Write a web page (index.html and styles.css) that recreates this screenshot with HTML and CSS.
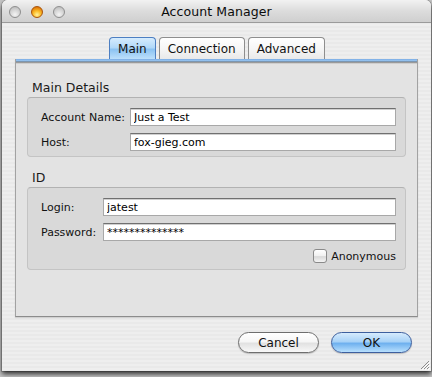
FILE: index.html
```html
<!DOCTYPE html>
<html lang="en">
<head>
    <meta charset="UTF-8">
    <meta name="viewport" content="width=device-width, initial-scale=1.0">
    <title>Account Manager</title>
    <link rel="stylesheet" href="styles.css">
</head>
<body>
    <div class="window">
        <div class="titlebar">
            <div class="lights">
                <span class="light"></span>
                <span class="light light-min"></span>
                <span class="light"></span>
            </div>
            <div class="title">Account Manager</div>
        </div>

        <div class="content">
            <div class="tabs">
                <div class="tab tab-active">Main</div>
                <div class="tab">Connection</div>
                <div class="tab">Advanced</div>
            </div>

            <div class="pane">
                <h3 class="section-title">Main Details</h3>
                <div class="group">
                    <div class="form-grid form-grid-wide">
                        <label for="accountName">Account Name:</label>
                        <input type="text" id="accountName" class="field" value="Just a Test">
                        <label for="host">Host:</label>
                        <input type="text" id="host" class="field" value="fox-gieg.com">
                    </div>
                </div>

                <h3 class="section-title section-gap">ID</h3>
                <div class="group">
                    <div class="form-grid form-grid-narrow">
                        <label for="login">Login:</label>
                        <input type="text" id="login" class="field" value="jatest">
                        <label for="password">Password:</label>
                        <input type="text" id="password" class="field" value="**************">
                    </div>
                    <div class="check-row">
                        <span class="checkbox"></span>
                        <span class="check-label">Anonymous</span>
                    </div>
                </div>
            </div>

            <div class="button-group">
                <button type="button" class="btn">Cancel</button>
                <button type="button" class="btn btn-default">OK</button>
            </div>
        </div>

        <svg class="grip" width="11" height="11" viewBox="0 0 11 11">
            <path d="M10 2 L2 10 M10 5 L5 10 M10 8 L8 10" stroke="#8c8c8c" stroke-width="1"/>
            <path d="M11 3 L3 11 M11 6 L6 11 M11 9 L9 11" stroke="#ffffff" stroke-width="1"/>
        </svg>
    </div>
</body>
</html>
```

FILE: styles.css
```css
/* Basic Reset */
* {
    box-sizing: border-box;
    margin: 0;
    padding: 0;
}

body {
    font-family: "DejaVu Sans", Verdana, sans-serif;
    background-color: #c4c4c4;
    width: 432px;
    height: 377px;
    overflow: hidden;
    padding-left: 2px;
}

.window {
    position: relative;
    width: 429px;
    height: 371px;
    border-radius: 6px 6px 0 0;
    background: repeating-linear-gradient(#eeeeee 0, #eeeeee 2px, #e9e9e9 2px, #e9e9e9 4px);
    box-shadow: 0 3px 5px rgba(0, 0, 0, 0.75), 0 0 0 1px rgba(0, 0, 0, 0.15);
    overflow: hidden;
}

.titlebar {
    position: relative;
    height: 23px;
    background: linear-gradient(#f2f2f2, #dcdcdc 50%, #cfcfcf);
    border-bottom: 1px solid #9a9a9a;
    display: flex;
    align-items: center;
    justify-content: center;
}

.lights {
    position: absolute;
    left: 7px;
    top: 6px;
    display: flex;
    gap: 10px;
}

.light {
    width: 12px;
    height: 12px;
    border-radius: 50%;
    border: 1px solid #8e8e8e;
    background: radial-gradient(circle at 50% 75%, #f4f4f4 0, #d8d8d8 45%, #b4b4b4 100%);
}

.light-min {
    border-color: #a9540a;
    background: radial-gradient(circle at 50% 78%, #fff2a0 0, #fbbf2c 40%, #e07a0a 80%, #b85a06 100%);
}

.title {
    font-size: 12.5px;
    color: #0c0c0c;
    padding-top: 1px;
    letter-spacing: 0.1px;
}

.content {
    display: flex;
    flex-direction: column;
}

.tabs {
    display: flex;
    justify-content: center;
    gap: 3px;
    margin-top: 14px;
    height: 22px;
    padding-left: 1px;
}

.tab {
    height: 22px;
    padding: 0 8px;
    font-size: 12px;
    color: #111;
    display: flex;
    align-items: center;
    border: 1px solid #8e8e8e;
    border-bottom: none;
    border-radius: 4px 4px 0 0;
    background: linear-gradient(#ffffff, #f6f6f6 50%, #e9e9e9);
}

.tab-active {
    border-color: #4d7fc2;
    background: linear-gradient(#d6ecfe, #b2d9f9 45%, #8cc3f2 55%, #bde0fb);
}

.pane {
    margin: 0 13px;
    padding: 21px 11px 46px;
    background: linear-gradient(#5f98dc 0, #a6cdf3 1px, #7db2e8 2px, #7a7a7a 3px, #b9b9b9 4px, #e3e3e3 5px);
    border-left: 1px solid #a2a2a2;
    border-right: 1px solid #a2a2a2;
    border-bottom: 1px solid #8c8c8c;
    box-shadow: 0 1px 1px rgba(0, 0, 0, 0.12);
}

.section-title {
    font-size: 12.5px;
    font-weight: normal;
    color: #1a1a1a;
    line-height: 16px;
    padding-left: 5px;
    margin-bottom: 1px;
}

.section-gap {
    margin-top: 13px;
}

.group {
    background-color: #d9d9d9;
    border: 1px solid #c4c4c4;
    border-top-color: #b2b2b2;
    border-radius: 4px;
    padding: 10px 9px 5px 13px;
}

.form-grid {
    display: grid;
    row-gap: 7px;
    align-items: center;
}

.form-grid-wide {
    grid-template-columns: 89px 1fr;
}

.form-grid-narrow {
    grid-template-columns: 62px 1fr;
}

label,
.check-label {
    font-size: 11px;
    color: #111;
}

.field {
    height: 18px;
    width: 100%;
    padding: 0 3px;
    font-family: inherit;
    font-size: 11px;
    color: #000;
    background-color: #fff;
    border: 1px solid #a8a8a8;
    border-top-color: #707070;
    box-shadow: inset 0 1px 0 #d0d0d0;
    outline: none;
}

.check-row {
    display: flex;
    justify-content: flex-end;
    align-items: center;
    gap: 4px;
    margin-top: 8px;
    margin-bottom: 1px;
    height: 14px;
}

.checkbox {
    width: 14px;
    height: 14px;
    border: 1px solid #8a8a8a;
    border-radius: 3px;
    background: linear-gradient(#ffffff, #f0f0f0 50%, #d8d8d8 55%, #f4f4f4);
}

.button-group {
    display: flex;
    justify-content: flex-end;
    gap: 12px;
    margin-top: 15px;
    padding-right: 19px;
}

.btn {
    width: 81px;
    height: 21px;
    border-radius: 11px;
    font-family: inherit;
    font-size: 12px;
    color: #111;
    border: 1px solid #6e6e6e;
    background: linear-gradient(#ffffff, #f6f6f6 45%, #e2e2e2 55%, #f8f8f8);
    box-shadow: 0 1px 1px rgba(0, 0, 0, 0.2);
    cursor: pointer;
}

.btn-default {
    border-color: #3d5f9e;
    background: linear-gradient(#d6ebfd, #a8d2f7 45%, #6fb1ef 55%, #b8e0fd);
}

.grip {
    position: absolute;
    right: 1px;
    bottom: 1px;
}
```
